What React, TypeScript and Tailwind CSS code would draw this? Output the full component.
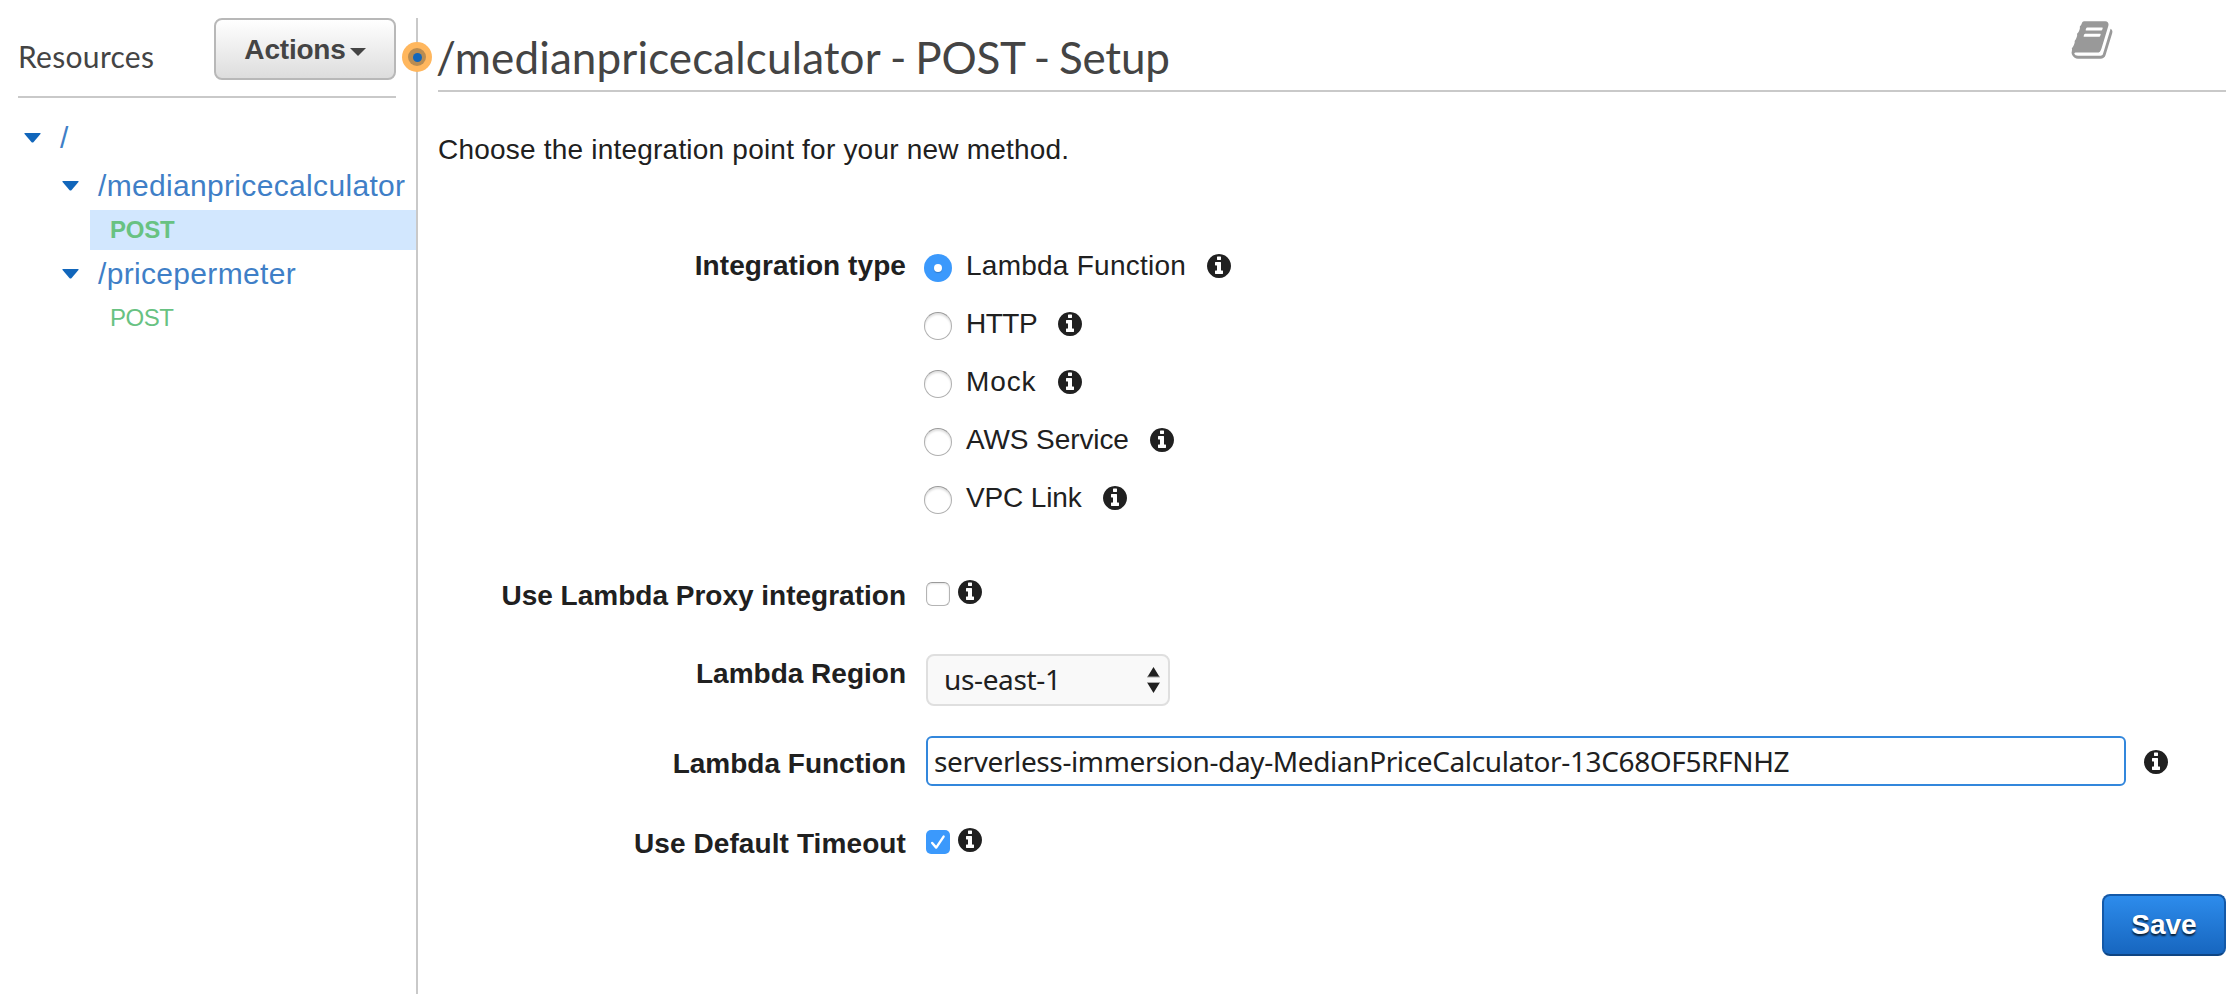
import React from "react";

function InfoIcon({ className = "" }: { className?: string }) {
  return (
    <svg viewBox="128 128 1536 1536" className={"size-6 shrink-0 fill-[#202020] " + className} aria-hidden="true">
      <path d="M1152 1376v-160q0-14-9-23t-23-9h-96v-512q0-14-9-23t-23-9h-320q-14 0-23 9t-9 23v160q0 14 9 23t23 9h96v320h-96q-14 0-23 9t-9 23v160q0 14 9 23t23 9h448q14 0 23-9t9-23zm-128-896v-160q0-14-9-23t-23-9h-192q-14 0-23 9t-9 23v160q0 14 9 23t23 9h192q14 0 23-9t9-23zm640 416q0 209-103 385.5t-279.5 279.5-385.5 103-385.5-103-279.5-279.5-103-385.5 103-385.5 279.5-279.5 385.5-103 385.5 103 279.5 279.5 103 385.5z" />
    </svg>
  );
}

function BookIcon() {
  return (
    <svg viewBox="0 0 1792 1792" className="size-11 fill-[#999]" aria-hidden="true">
      <path d="M1703 478q40 57 18 129l-275 906q-19 64-76.5 107.5t-122.5 43.5h-923q-77 0-148.5-53.5t-99.5-131.5q-24-67-2-127 0-4 3-27t4-37q1-8-3-21.5t-3-19.5q2-11 8-21t16.5-23.5 16.5-23.5q23-38 45-91.5t30-91.5q3-10 .5-30t-.5-28q3-11 17-28t17-23q21-36 42-92t25-90q1-9-2.5-32t.5-28q4-13 22-30.5t22-22.5q19-26 42.5-84.5t27.5-96.5q1-8-3-25.5t-2-26.5q2-8 9-18t18-23 17-21q8-12 16.5-30.5t15-35 16-36 19.5-32 26.5-23.5 36-11.5 47.5 5.5l-1 3q38-9 51-9h761q74 0 114 56t18 130l-274 906q-36 119-71.5 153.5t-128.5 34.5h-869q-27 0-38 15-11 16-1 43 24 70 144 70h923q29 0 56-15.5t35-41.5l300-987q7-22 5-57 38 15 59 43zm-1064 2q-4 13 2 22.5t20 9.5h608q13 0 25.5-9.5t16.5-22.5l21-64q4-13-2-22.5t-20-9.5h-608q-13 0-25.5 9.5t-16.5 22.5zm-83 256q-4 13 2 22.5t20 9.5h608q13 0 25.5-9.5t16.5-22.5l21-64q4-13-2-22.5t-20-9.5h-608q-13 0-25.5 9.5t-16.5 22.5z" />
    </svg>
  );
}

function Caret() {
  return (
    <svg viewBox="0 0 18 10" preserveAspectRatio="none" className="h-2.5 w-[17px] shrink-0 fill-[#1166bb]" aria-hidden="true">
      <path d="M1 0h16q1 0 .4.9L10.2 9q-1.2 1.2-2.4 0L.6.9Q0 0 1 0z" />
    </svg>
  );
}

function TreeItem({ name, className }: { name: string; className: string }) {
  return (
    <div className={"flex h-12 items-center gap-[19px] whitespace-nowrap text-[30px] tracking-[0.33px] text-[#3f7fc7] " + className}>
      <Caret />
      <span className="pb-0.5">{name}</span>
    </div>
  );
}

function Sidebar() {
  return (
    <aside className="w-[416px] shrink-0">
      <div className="mt-[18px] mr-5 ml-[18px] flex h-20 items-start justify-between border-b-2 border-[#c9c9c9]">
        <h2 className="mt-[18px] font-['Lato',sans-serif] text-[30px] leading-10 tracking-[0.3px] text-[#444]">Resources</h2>
        <button className="flex h-[62px] w-[182px] items-center justify-center gap-1 rounded-lg border-2 border-[#b8b8b8] bg-linear-to-b from-white to-[#dddddd] text-[28px] font-bold tracking-[-0.2px] text-[#444]">
          <span className="pt-0.5">Actions</span>
          <svg viewBox="0 0 16 8" className="mt-1.5 h-2 w-4 fill-[#444]" aria-hidden="true"><path d="M0 0h16L8 8z" /></svg>
        </button>
      </div>
      <nav className="pt-4">
        <TreeItem name="/" className="pl-6" />
        <TreeItem name="/medianpricecalculator" className="pl-[62px]" />
        <div className="ml-[90px] h-10 bg-[#d2e7fe] pl-5 text-2xl leading-10 font-bold tracking-[-0.2px] text-[#68c282]">POST</div>
        <TreeItem name="/pricepermeter" className="pl-[62px]" />
        <div className="ml-[90px] h-10 pl-5 text-2xl leading-10 tracking-[-0.5px] text-[#68c282]">POST</div>
      </nav>
    </aside>
  );
}

function Row({ label, className, labelClass = "", children }: { label: string; className: string; labelClass?: string; children: React.ReactNode }) {
  return (
    <div className={"flex items-start " + className}>
      <div className={"w-[468px] shrink-0 text-right text-[28px] leading-10 font-bold whitespace-nowrap " + labelClass}>{label}</div>
      {children}
    </div>
  );
}

const types = [
  { name: "Lambda Function", track: "tracking-[0.25px]" },
  { name: "HTTP", track: "tracking-[-0.5px]" },
  { name: "Mock", track: "tracking-[0.9px]" },
  { name: "AWS Service", track: "tracking-[-0.1px]" },
  { name: "VPC Link", track: "tracking-[-0.15px]" },
];

function Radio({ checked }: { checked: boolean }) {
  return checked ? (
    <span className="mt-2 flex size-7 items-center justify-center rounded-full bg-[#3b99fc]">
      <span className="size-2 rounded-full bg-white shadow-[0_1px_1px_rgba(0,0,0,0.2)]" />
    </span>
  ) : (
    <span className="mt-2 size-7 rounded-full border border-[#b0b0b0] border-t-[#9a9a9a] bg-white shadow-[inset_0_2px_2px_rgba(0,0,0,0.12)]" />
  );
}

export default function App() {
  return (
    <div className="flex h-[994px] overflow-hidden bg-white font-['Liberation_Sans',Arial,sans-serif] text-[#202020]">
      <Sidebar />
      <div className="relative mt-[18px] w-0.5 shrink-0 bg-[#c9c9c9]">
        <div className="absolute top-6 -left-3.5 flex size-[30px] items-center justify-center rounded-full bg-[#ffb75e]">
          <div className="flex size-[18px] items-center justify-center rounded-full bg-[#b98c52]">
            <div className="size-[9px] rounded-full bg-[#1166bb]" />
          </div>
        </div>
      </div>
      <main className="flex min-w-0 flex-1 flex-col pr-3 pl-5">
        <header className="flex h-[92px] items-start justify-between border-b-2 border-[#c9c9c9] pr-[112.5px]">
          <h1 className="mt-[33px] -ml-0.5 font-['Lato',sans-serif] text-[44px] leading-[48px] tracking-[-0.25px] text-[#444] [word-spacing:-1.8px]">
            <span className="tracking-[0.12px]">/medianpricecalculator</span> - POST - Setup
          </h1>
          <div className="mt-[18px]"><BookIcon /></div>
        </header>
        <p className="mt-[38px] text-[28px] leading-10 tracking-[0.21px]">Choose the integration point for your new method.</p>

        <Row label="Integration type" className="mt-[76px]" labelClass="tracking-[0.08px]">
          <div className="ml-[18px]">
            {types.map((t, i) => (
              <div key={t.name} className="flex h-[58px] items-start">
                <Radio checked={i === 0} />
                <span className={"ml-3.5 text-[28px] leading-10 " + t.track}>{t.name}</span>
                <InfoIcon className="mt-2 ml-[21px]" />
              </div>
            ))}
          </div>
        </Row>

        <Row label="Use Lambda Proxy integration" className="mt-10 h-[78px]">
          <span className="mt-1.5 ml-5 size-6 rounded-[6px] border border-[#b4b4b4] border-t-[#9a9a9a] bg-white shadow-[inset_0_1px_2px_rgba(0,0,0,0.12)]" />
          <InfoIcon className="mt-1 ml-2" />
        </Row>

        <Row label="Lambda Region" className="h-[82px]">
          <div className="ml-5 flex h-[52px] w-[244px] items-center justify-between rounded-lg border-2 border-[#dfdfdf] bg-[#f9f9f9] pr-2 pl-4 font-['Noto_Sans',sans-serif] text-[28px] tracking-[-0.36px]">
            <span className="pb-0.5">us-east-1</span>
            <svg viewBox="0 0 13 26" className="h-[26px] w-[13px]" aria-hidden="true">
              <path d="M6.5 0 12.6 10H.4zM6.5 26 12.6 16H.4z" fill="#202020" />
              <path d="M0 10h13M0 15.5h13" stroke="#aaa" />
            </svg>
          </div>
        </Row>

        <Row label="Lambda Function" className="h-[88px]" labelClass="pt-2">
          <div className="ml-5 flex h-[50px] w-[1200px] items-center rounded-[6px] border-2 border-[#3387dc] pl-1.5 font-['Noto_Sans',sans-serif] text-[28px] tracking-[-0.38px]">
            serverless-immersion-day-MedianPriceCalculator-13C68OF5RFNHZ
          </div>
          <InfoIcon className="mt-3.5 ml-[18px]" />
        </Row>

        <Row label="Use Default Timeout" className="h-[70px]" labelClass="tracking-[0.1px]">
          <span className="mt-1.5 ml-5 flex size-6 items-center justify-center rounded-[5px] bg-[#3b99fc]">
            <svg viewBox="0 0 24 24" className="size-6" fill="none" stroke="#fff" strokeWidth="2.4" strokeLinecap="round" strokeLinejoin="round" aria-hidden="true">
              <path d="M6.2 13 10.2 17.6 17.6 6.6" />
            </svg>
          </span>
          <InfoIcon className="mt-1 ml-2" />
        </Row>

        <button className="h-[62px] w-[124px] self-end rounded-lg border-2 border-[#1459a8] border-b-[#0f4583] bg-linear-to-b from-[#2d8cec] to-[#1766bf] text-[28px] font-bold text-white [text-shadow:0_2px_2px_rgba(0,0,0,0.75)]">
          Save
        </button>
      </main>
    </div>
  );
}
